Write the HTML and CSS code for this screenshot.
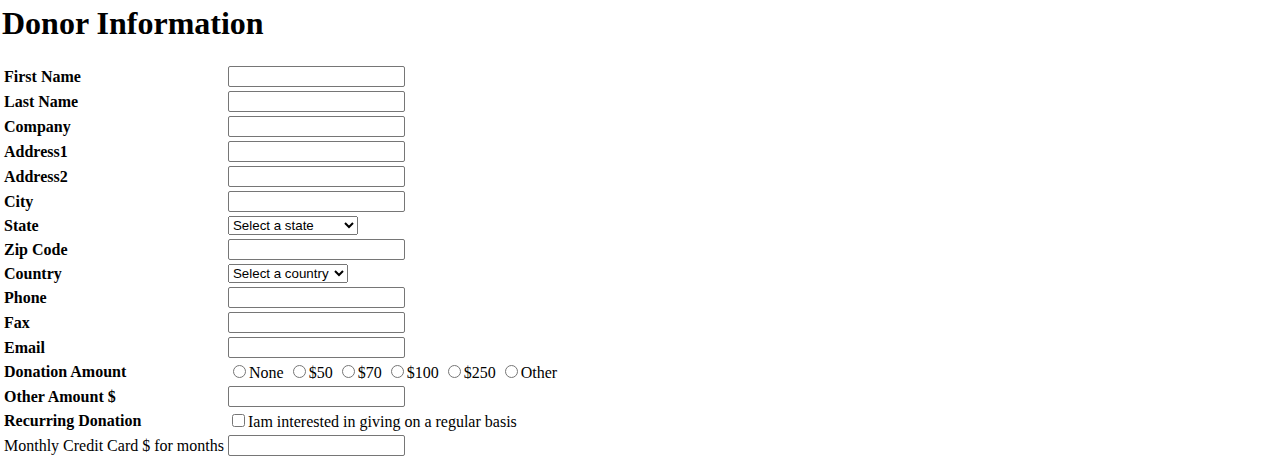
FILE: index.html
```html
<!DOCTYPE html>
<html>
<head>
<meta charset="utf-8">
<title>Donor Information</title>
<link rel="stylesheet" href="styles.css">
</head>
<body class="page">
<h1 class="title">Donor Information</h1>
<form class="donor-form">
<table class="form-table" cellspacing="2" cellpadding="1">
<tr><td class="label">First Name</td><td><input class="text-field" type="text"></td></tr>
<tr><td class="label">Last Name</td><td><input class="text-field" type="text"></td></tr>
<tr><td class="label">Company</td><td><input class="text-field" type="text"></td></tr>
<tr><td class="label">Address1</td><td><input class="text-field" type="text"></td></tr>
<tr><td class="label">Address2</td><td><input class="text-field" type="text"></td></tr>
<tr><td class="label">City</td><td><input class="text-field" type="text"></td></tr>
<tr><td class="label">State</td><td><select class="select-field state-select"><option>Select a state</option></select></td></tr>
<tr><td class="label">Zip Code</td><td><input class="text-field" type="text"></td></tr>
<tr><td class="label">Country</td><td><select class="select-field country-select"><option>Select a country</option></select></td></tr>
<tr><td class="label">Phone</td><td><input class="text-field" type="text"></td></tr>
<tr><td class="label">Fax</td><td><input class="text-field" type="text"></td></tr>
<tr><td class="label">Email</td><td><input class="text-field" type="text"></td></tr>
<tr><td class="label">Donation Amount</td><td class="radio-cell"><input class="radio" type="radio" name="amt">None <input class="radio" type="radio" name="amt">$50 <input class="radio" type="radio" name="amt">$70 <input class="radio" type="radio" name="amt">$100 <input class="radio" type="radio" name="amt">$250 <input class="radio" type="radio" name="amt">Other</td></tr>
<tr><td class="label">Other Amount $</td><td><input class="text-field" type="text"></td></tr>
<tr><td class="label">Recurring Donation</td><td><input class="checkbox" type="checkbox">Iam interested in giving on a regular basis</td></tr>
<tr><td class="plain-label">Monthly Credit Card $ for months</td><td><input class="text-field" type="text"></td></tr>
</table>
</form>
</body>
</html>
```
FILE: styles.css
```css
.page {
  margin: 5px 1px;
  font-family: "Liberation Serif", "Times New Roman", serif;
  font-size: 16px;
  color: #000;
  background: #fff;
}
.title {
  font-size: 32px;
  font-weight: bold;
  margin: 0 0 21px 1px;
}
.donor-form {
  margin: 0;
}
.form-table {
  border-collapse: separate;
  border-spacing: 2px;
}
.form-table td {
  padding: 1px;
  vertical-align: middle;
  white-space: nowrap;
}
.label {
  font-weight: bold;
}
.plain-label {
  font-weight: normal;
}
.text-field {
  font-family: "Liberation Sans", Arial, sans-serif;
  font-size: 13.333px;
  width: 177px;
  height: 21px;
  box-sizing: border-box;
  margin: 0;
  padding: 1px 2px;
  border: 1px solid #767676;
  border-radius: 2px;
}
.select-field {
  font-family: "Liberation Sans", Arial, sans-serif;
  font-size: 13.333px;
  height: 19px;
  margin: 0;
  box-sizing: border-box;
}
.state-select {
  width: 130px;
}
.country-select {
  width: 120px;
}
.radio {
  margin: 3px 3px 0 5px;
}
.checkbox {
  margin: 3px 3px 3px 4px;
}
```
